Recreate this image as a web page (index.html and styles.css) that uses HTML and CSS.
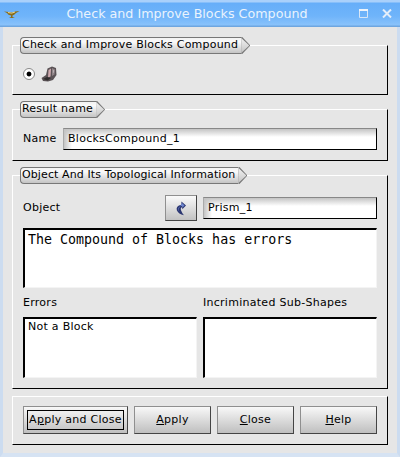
FILE: index.html
```html
<!DOCTYPE html>
<html>
<head>
<meta charset="utf-8">
<title>Check and Improve Blocks Compound</title>
<link rel="stylesheet" href="styles.css">
</head>
<body>
<div class="window">
  <header class="titlebar">
    <svg class="lamp" width="16" height="10" viewBox="0 0 16 10"><path d="M0 2.5 L5 3 Q8 4 11 2.5 L15.5 2 L12 4 Q10 6 8.5 6.5 L8.5 8 L11 9 L5 9 L7 8 L7 6.5 Q4 6 3 4 Z" fill="#8a6d1c"/><path d="M4 3.5 Q8 5 11 3" stroke="#e8d38a" fill="none"/></svg>
    <div class="title">Check and Improve Blocks Compound</div>
    <div class="winbtns">
      <svg width="9" height="9" viewBox="0 0 9 9"><path d="M0.5 1 H8.5 V8.5 H0.5 Z" fill="none" stroke="#d8e6f6"/><path d="M0 1 H9" stroke="#eef4fb" stroke-width="2"/></svg>
      <svg width="10" height="9" viewBox="0 0 10 9"><path d="M1 0.5 L9 8.5 M9 0.5 L1 8.5" stroke="#e4eefa" stroke-width="2"/></svg>
    </div>
  </header>
  <main class="content">
    <section class="group g1">
      <div class="tab">Check and Improve Blocks Compound</div>
      <div class="radio-row">
        <span class="radio"></span>
        <svg width="16" height="16" viewBox="0 0 16 16"><path d="M0.5 12 L5 9 L6.5 2.5 L11 0.5 L15 2 L15.5 9 L12 14 L7 15.5 L2 15 Z" fill="#5a5255"/><path d="M7.5 4 L10 2.5 L9.5 10.5 L7 11.5 Z" fill="#cfa9ae"/><path d="M11 2 L14 3.5 L13.5 8.5 L11 10 Z" fill="#8f8387"/><path d="M12 4 L13 4.5 L12.5 7 L12 7 Z" fill="#c4bcbe"/><path d="M2 13 L6 11 L10 12 L6.5 14.5 Z" fill="#2f2c2c"/></svg>
      </div>
    </section>
    <section class="group g2">
      <div class="tab">Result name</div>
      <div class="row">
        <label class="name-label">Name</label>
        <div class="field grow">BlocksCompound_1</div>
      </div>
    </section>
    <section class="group g3">
      <div class="tab tab-long">Object And Its Topological Information</div>
      <div class="row object-row">
        <label class="object-label">Object</label>
        <button class="pick">
          <svg width="12" height="15" viewBox="0 0 12 18"><path d="M6.5 0.5 L12 5.5 L7.5 10 L7.5 7.5 Q5 8 6 11 Q7 14 9.5 17 Q3 15.5 1 11 Q-0.5 6 6.5 4.5 Z" fill="#2a3570"/><path d="M7.2 2.5 L10.3 5.5 L8 7.5 L7 6 Q2.8 6.5 2.6 10 Q3 12 5 14 Q2 10 4 8 Z" fill="#6d85cf"/></svg>
        </button>
        <div class="field grow">Prism_1</div>
      </div>
      <div class="message">The Compound of Blocks has errors</div>
      <div class="lists">
        <div class="list-col">
          <div class="list-label">Errors</div>
          <div class="list">Not a Block</div>
        </div>
        <div class="list-col">
          <div class="list-label">Incriminated Sub-Shapes</div>
          <div class="list"></div>
        </div>
      </div>
    </section>
    <section class="group g4">
      <button class="btn primary"><span class="focus">A<u>p</u>ply and Close</span></button>
      <button class="btn"><span><u>A</u>pply</span></button>
      <button class="btn"><span><u>C</u>lose</span></button>
      <button class="btn"><span><u>H</u>elp</span></button>
    </section>
  </main>
</div>
</body>
</html>
```
FILE: styles.css
```css
* { box-sizing: border-box; }
html, body { margin: 0; padding: 0; }
body {
  width: 400px;
  height: 457px;
  overflow: hidden;
  font-family: "DejaVu Sans", sans-serif;
  font-size: 11px;
  letter-spacing: 0.27px;
  color: #000;
}
.window {
  width: 400px;
  height: 457px;
  display: flex;
  flex-direction: column;
  background: #e6e6e6;
  border-left: 3px solid #ccdcf0;
  border-right: 3px solid #ccdcf0;
  border-bottom: 4px solid #d6e3f3;
}
.titlebar {
  height: 27px;
  margin: 0 -3px;
  flex: none;
  display: flex;
  align-items: center;
  padding: 0 8px 0 4px;
  background: linear-gradient(#a9d0fb 0, #a9d0fb 2px, #66aef9 3px, #6fb4fa 16px, #89c2fb 25px, #6ea6e0 26px);
  color: #eaf3fd;
}
.lamp { flex: none; }
.title {
  flex: 1;
  text-align: center;
  font-size: 12.7px;
  letter-spacing: 0;
  padding-right: 5px;
}
.winbtns { display: flex; gap: 14px; align-items: center; }
.content {
  flex: 1;
  display: flex;
  flex-direction: column;
  padding: 18px 9px 0 9px;
}
.group {
  position: relative;
  border-top: 1px solid #fff;
  border-left: 1px solid #fff;
  border-right: 1px solid #000;
  border-bottom: 1px solid #000;
}
.g1 { height: 50px; padding: 19px 0 0 10px; }
.g2 { height: 52px; margin-top: 14px; padding: 18px 10px 0 10px; }
.g3 { height: 214px; margin-top: 14px; padding: 19px 10px 0 10px; }
.g4 {
  height: 49px;
  margin-top: 7px;
  padding: 9px 10px 0 10px;
  display: flex;
  gap: 6px;
}
.tab {
  position: absolute;
  top: -9px;
  left: 7px;
  height: 17px;
  line-height: 14px;
  padding: 0 3px 0 1px;
  letter-spacing: 0.22px;
  background: linear-gradient(#f2f2f2, #fafafa 25%, #c4c4c4);
  border: 1px solid #777;
  border-right: none;
  border-radius: 4px 0 0 4px;
  white-space: nowrap;
}
.tab-long { letter-spacing: 0.11px; }
.tab::before {
  content: "";
  position: absolute;
  top: -1px;
  right: -9px;
  width: 9px;
  height: 17px;
  background: #777;
  clip-path: polygon(0 0, 1px 0, 100% 50%, 1px 100%, 0 100%);
}
.tab::after {
  content: "";
  position: absolute;
  top: 0;
  right: -8px;
  width: 8px;
  height: 15px;
  background: linear-gradient(#f2f2f2, #c4c4c4);
  clip-path: polygon(0 0, 100% 50%, 0 100%);
}
.radio-row { display: flex; align-items: center; gap: 6px; height: 18px; }
.radio {
  width: 12px;
  height: 12px;
  border-radius: 50%;
  border: 1px solid #8a8a8a;
  background: radial-gradient(circle, #000 0, #000 2px, #fff 2.8px);
  flex: none;
}
.row { display: flex; align-items: center; }
.name-label, .object-label { flex: none; padding-bottom: 2px; }
.name-label { width: 40px; }
.object-label { width: 142px; }
.field {
  height: 22px;
  line-height: 20px;
  padding-left: 4px;
  border-top: 1px solid #888;
  border-left: 1px solid #aaa;
  border-bottom: 1px solid #000;
  border-right: 1px solid #000;
  background:
    linear-gradient(#c4c4c4, rgba(255,255,255,0) 8px),
    linear-gradient(90deg, #c4c4c4, rgba(255,255,255,0) 8px),
    #fff;
}
.grow { flex: 1; }
.object-row { height: 26px; }
.pick {
  width: 32px;
  height: 26px;
  flex: none;
  margin-right: 6px;
  padding: 0;
  display: flex;
  align-items: center;
  justify-content: center;
  border: 1px solid #8f8f8f;
  border-right-color: #444;
  border-bottom-color: #444;
  background: linear-gradient(#fafafa, #c2c2c2);
}
.message {
  margin-top: 7px;
  height: 60px;
  padding: 1px 3px;
  font-family: "DejaVu Sans Mono", monospace;
  font-size: 13.3px;
  letter-spacing: 0;
  line-height: 18px;
  background: #fff;
  border-top: 2px solid #000;
  border-left: 2px solid #000;
  border-right: 1px solid #f4f4f4;
  border-bottom: 1px solid #f4f4f4;
}
.lists { display: flex; gap: 6px; margin-top: 6px; }
.list-col { flex: 1; min-width: 0; }
.list-label { height: 23px; line-height: 15px; padding-top: 1px; }
.list {
  height: 61px;
  padding: 0 3px;
  line-height: 15px;
  background: #fff;
  border-top: 2px solid #000;
  border-left: 2px solid #000;
  border-right: 1px solid #f4f4f4;
  border-bottom: 1px solid #f4f4f4;
}
.btn {
  flex: none;
  width: 77px;
  height: 28px;
  padding: 0 0 2px;
  font: inherit;
  letter-spacing: inherit;
  color: #000;
  border: 1px solid #8f8f8f;
  border-right-color: #444;
  border-bottom-color: #444;
  background: linear-gradient(#f8f8f8, #bfbfbf);
  display: flex;
  align-items: center;
  justify-content: center;
}
.btn.primary { width: 105px; padding: 3px; }
.focus {
  flex: 1;
  align-self: stretch;
  border: 1px solid #000;
  line-height: 17px;
  text-align: center;
  white-space: nowrap;
}
```
